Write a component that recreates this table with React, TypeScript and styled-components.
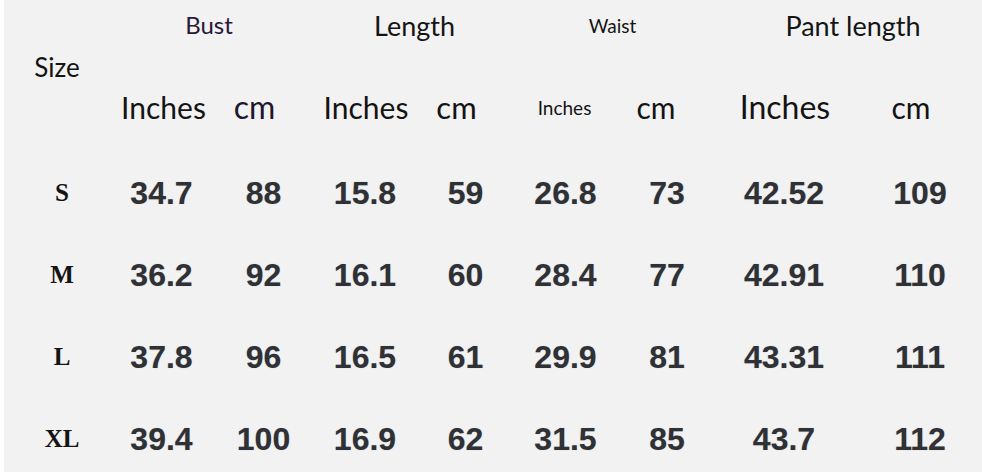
import styled, { createGlobalStyle } from "styled-components";

const GlobalStyle = createGlobalStyle`
  html, body {
    margin: 0;
    padding: 0;
    background: #ffffff;
  }
`;

const COLUMNS = "106px 103px 101px 102px 99px 101px 102px 132px 140px";

type Group = { title: string; size: number; color?: string; shift?: number };
type Unit = { label: string; size: number; color?: string; shift?: number };

const groups: Group[] = [
  { title: "Bust", size: 24, color: "#2a1838", shift: -3 },
  { title: "Length", size: 27 },
  { title: "Waist", size: 19, shift: -4 },
  { title: "Pant length", size: 27, shift: -1 },
];

const units: Unit[] = [
  { label: "Inches", size: 30, shift: 2 },
  { label: "cm", size: 32, color: "#1f1630", shift: -9 },
  { label: "Inches", size: 30, shift: 1 },
  { label: "cm", size: 31, shift: -9 },
  { label: "Inches", size: 19, shift: -1 },
  { label: "cm", size: 30, shift: -11 },
  { label: "Inches", size: 32, shift: 1 },
  { label: "cm", size: 30, shift: -9 },
];

const rows = [
  { size: "S", values: ["34.7", "88", "15.8", "59", "26.8", "73", "42.52", "109"] },
  { size: "M", values: ["36.2", "92", "16.1", "60", "28.4", "77", "42.91", "110"] },
  { size: "L", values: ["37.8", "96", "16.5", "61", "29.9", "81", "43.31", "111"] },
  { size: "XL", values: ["39.4", "100", "16.9", "62", "31.5", "85", "43.7", "112"] },
];

export default function App() {
  return (
    <>
      <GlobalStyle />
      <Chart>
        <Head>
          {groups.map((g, i) => (
            <GroupTitle key={g.title} $col={2 + i * 2} $size={g.size} $color={g.color} $shift={g.shift}>
              {g.title}
            </GroupTitle>
          ))}
          <SizeTitle>Size</SizeTitle>
          {units.map((u, i) => (
            <UnitLabel key={i} $col={2 + i} $size={u.size} $color={u.color} $shift={u.shift}>
              {u.label}
            </UnitLabel>
          ))}
        </Head>
        <Body>
          {rows.map((r) => (
            <Row key={r.size}>
              <SizeCell>{r.size}</SizeCell>
              {r.values.map((v, i) => (
                <ValueCell key={i}>{v}</ValueCell>
              ))}
            </Row>
          ))}
        </Body>
      </Chart>
    </>
  );
}

const Chart = styled.div`
  width: 978px;
  height: 472px;
  overflow: hidden;
  background: #f2f2f2;
  border-left: 4px solid #ffffff;
`;

const Head = styled.div`
  display: grid;
  grid-template-columns: ${COLUMNS};
  grid-template-rows: 50px 34px 46px;
  align-items: center;
  font-family: Lato, "Noto Sans", sans-serif;
  color: #141414;
`;

const GroupTitle = styled.div<{ $col: number; $size: number; $color?: string; $shift?: number }>`
  grid-row: 1;
  grid-column: ${(p) => p.$col} / span 2;
  text-align: center;
  font-size: ${(p) => p.$size}px;
  line-height: 1;
  color: ${(p) => p.$color || "#141414"};
  margin-left: ${(p) => (p.$shift || 0) * 2}px;
`;

const SizeTitle = styled.div`
  grid-row: 2;
  grid-column: 1;
  text-align: center;
  font-size: 26px;
  line-height: 1;
`;

const UnitLabel = styled.div<{ $col: number; $size: number; $color?: string; $shift?: number }>`
  grid-row: 3;
  grid-column: ${(p) => p.$col};
  text-align: center;
  font-size: ${(p) => p.$size}px;
  line-height: 1;
  color: ${(p) => p.$color || "#141414"};
  margin-left: ${(p) => (p.$shift || 0) * 2}px;
`;

const Body = styled.div`
  padding-top: 22px;
`;

const Row = styled.div`
  display: grid;
  grid-template-columns: ${COLUMNS};
  height: 82px;
  align-items: center;
`;

const SizeCell = styled.div`
  text-align: center;
  padding-left: 10px;
  font-family: "Liberation Serif", serif;
  font-weight: 700;
  font-size: 25px;
  color: #141414;
`;

const ValueCell = styled.div`
  text-align: center;
  font-family: "Liberation Sans", Arial, sans-serif;
  font-weight: 700;
  font-size: 32px;
  color: #2f3135;
  text-shadow: 0 0 1px rgba(60, 80, 110, 0.35);
`;
